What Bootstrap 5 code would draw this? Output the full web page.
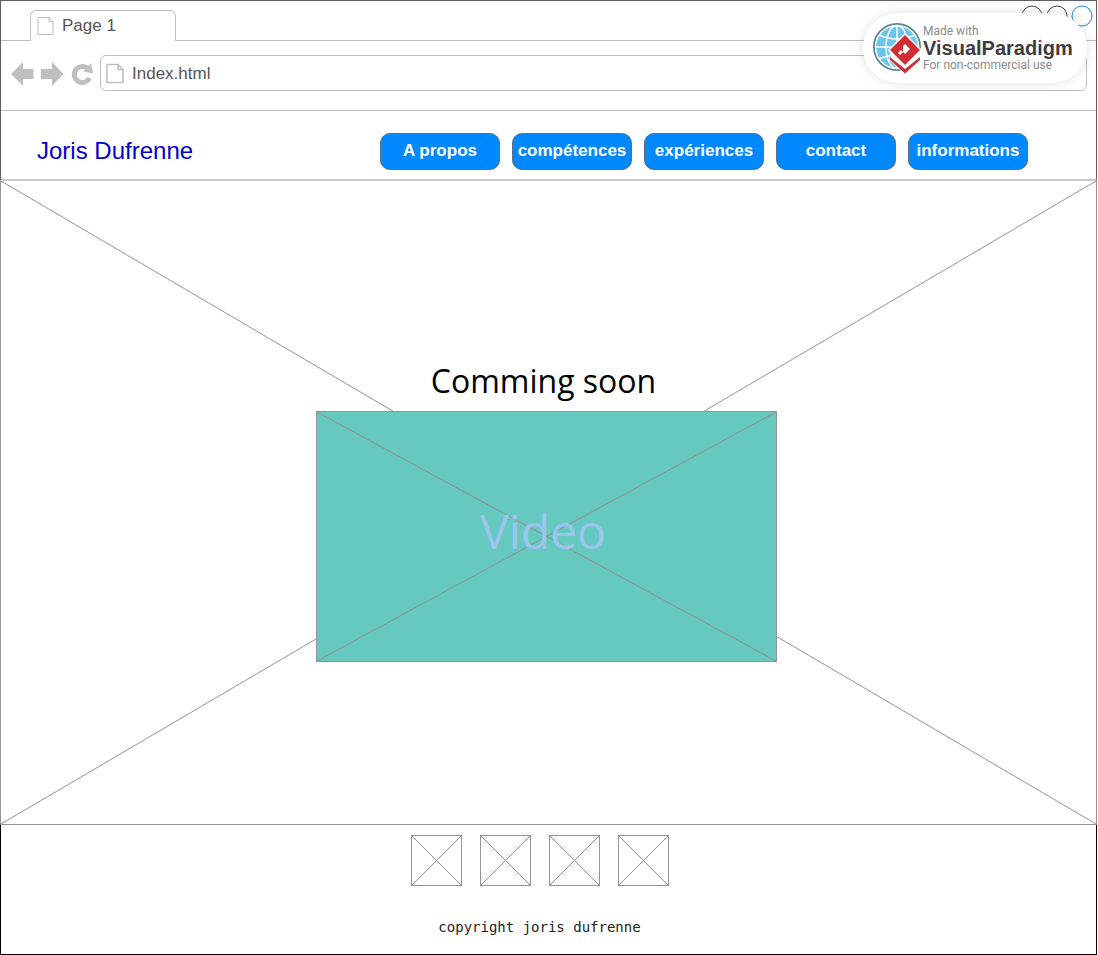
<!DOCTYPE html>
<html lang="fr">
<head>
<meta charset="utf-8">
<meta name="viewport" content="width=device-width, initial-scale=1">
<title>Joris Dufrenne</title>
<link href="https://cdn.jsdelivr.net/npm/bootstrap@5.3.0/dist/css/bootstrap.min.css" rel="stylesheet">
<style>
  body { font-family: "Liberation Sans", Arial, sans-serif; font-size: 17px; line-height: 24px; color: #555; background: #fff; }
  svg { display: block; }
  .browser-frame { margin-right: 1px; }
  .tab-strip { height: 41px; border: 1px solid #5f5f63; border-bottom: 0; padding-left: 29px; box-shadow: inset 0 -1px #bfbfbf; }
  .page-tab { width: 146px; height: 31px; padding: 0 6px; border: 1px solid #bfbfbf; border-bottom: 0; border-radius: 6px 6px 0 0; background: #fff; }
  .window-dots { gap: 3px; padding: 4px 3px 0 0; }
  .address-row { height: 70px; padding: 0 9px 6px 10px; gap: 7px; border: solid #5f5f63; border-width: 0 1px; box-shadow: inset 0 -1px #bfbfbf; }
  .tool-btn { padding: 0; border: 0; background: none; }
  .address-box { height: 36px; border: 1px solid #bfbfbf; border-radius: 6px; padding: 0 5px; background: #fff; }
  .address-box input { font-size: 17px; line-height: 24px; color: #555; border: 0; padding: 2px 0 0; outline: 0; background: none; }
  .site-head { min-height: 70px; padding: 12px 68px 0 36px; border: solid #5f5f63; border-width: 0 1px; border-bottom: 2px solid #c8c8c8; margin-bottom: -1px; }
  .site-name { font-size: 24px; color: #0000cd; text-decoration: none; }
  .site-links { gap: 12px; }
  .site-links .btn { --bs-btn-color: #fff; --bs-btn-bg: #0088ff; --bs-btn-border-color: #59708a; --bs-btn-hover-color: #fff; --bs-btn-hover-bg: #0078e0; --bs-btn-hover-border-color: #59708a; width: 120px; height: 37px; padding: 0; font-size: 17px; font-weight: 700; line-height: 24px; border-radius: 10px; }
  .hero { border: 1px solid #949494; border-top-color: #c8c8c8; padding: 14px 4px 0 0; }
  .cross { position: absolute; inset: 0; width: 100%; height: 100%; stroke: #949494; fill: none; }
  .cross line { vector-effect: non-scaling-stroke; }
  .soon { font-family: "Open Sans", sans-serif; font-size: 32px; line-height: 46px; font-weight: 400; color: #000; padding-right: 6px; margin-bottom: 7px; }
  .video-box { width: 461px; max-width: 100%; aspect-ratio: 461 / 251; background: #65c9bf; border: 1px solid #8f9796; }
  .video-label { font-family: "Open Sans", sans-serif; font-size: 48px; line-height: 64px; color: #9bc5ef; padding: 0 7px 10px 0; }
  .site-foot { border: solid #000; border-width: 0 1px 1px; padding: 10px 18px 17px 0; }
  .social { gap: 18px; }
  .social a { width: 51px; height: 51px; border: 1px solid #949494; position: relative; }
  .copy { font-family: "DejaVu Sans Mono", monospace; font-size: 14px; line-height: 20px; color: #222; margin-top: 31px; }
  .vp-pill { position: absolute; top: 13px; right: 10px; width: 224px; height: 70px; padding-left: 9px; border-radius: 35px; background: #fff; box-shadow: 0 0 12px rgba(0,0,0,.12); text-decoration: none; }
  .vp-small { font-family: Roboto, sans-serif; font-size: 12px; line-height: 14px; color: #8a8a8a; }
  .vp-name { font-family: "Liberation Sans", Arial, sans-serif; font-size: 20px; line-height: 20px; font-weight: 700; color: #3d3d3f; white-space: nowrap; }
  .dot-i { background: linear-gradient(#cf2e34 0 6px, #3d3d3f 6px); -webkit-background-clip: text; background-clip: text; color: transparent; }
</style>
</head>
<body>
<div class="browser-frame d-flex flex-column min-vh-100 position-relative">
  <div class="tab-strip d-flex justify-content-between align-items-end">
    <div class="page-tab d-flex align-items-center gap-2">
      <svg width="17" height="20" viewBox="0 0 17 20" fill="none" stroke="#bfbfbf"><path d="M1 1.5h11l4 4v13H1zM12 1.5v4h4"/></svg>
      <span>Page 1</span>
    </div>
    <div class="window-dots d-flex align-self-start">
      <svg width="22" height="22" viewBox="0 0 22 22" fill="none" stroke="#444"><circle cx="11" cy="11" r="10"/></svg>
      <svg width="22" height="22" viewBox="0 0 22 22" fill="none" stroke="#444"><circle cx="11" cy="11" r="10"/></svg>
      <svg width="22" height="22" viewBox="0 0 22 22" fill="none" stroke="#1e88e5"><circle cx="11" cy="11" r="10"/></svg>
    </div>
  </div>

  <div class="address-row d-flex align-items-center">
    <button class="tool-btn" type="button" aria-label="Back"><svg width="23" height="26" viewBox="0 0 23 26" fill="#bfbfbf"><path d="M0 14 12 2V9H22.500V19H12V26z"/></svg></button>
    <button class="tool-btn" type="button" aria-label="Forward"><svg width="23" height="26" viewBox="0 0 23 26" fill="#bfbfbf"><path d="M22.500 14 11 2V9H0V19H11V26z"/></svg></button>
    <button class="tool-btn" type="button" aria-label="Reload"><svg width="22" height="24" viewBox="0 0 22 24"><path d="M18.500 17A8 8 0 1 1 16 7" fill="none" stroke="#bfbfbf" stroke-width="5"/><path d="M20 2 22 12.500 12.500 10.500z" fill="#bfbfbf"/></svg></button>
    <div class="address-box flex-fill d-flex align-items-center gap-2">
      <svg width="18" height="21" viewBox="0 0 18 21" fill="none" stroke="#bfbfbf" stroke-width="1.500"><path d="M1 1.500h11l5 5v13H1zM12 1.500v5h5"/></svg>
      <input class="flex-fill" type="text" value="Index.html" aria-label="Address">
    </div>
  </div>

  <header class="site-head d-flex flex-wrap align-items-center justify-content-between">
    <a class="site-name" href="#">Joris Dufrenne</a>
    <nav class="site-links d-flex flex-wrap">
      <button class="btn" type="button">A propos</button>
      <button class="btn" type="button">compétences</button>
      <button class="btn" type="button">expériences</button>
      <button class="btn" type="button">contact</button>
      <button class="btn" type="button">informations</button>
    </nav>
  </header>

  <main class="hero position-relative flex-fill d-flex flex-column align-items-center justify-content-center">
    <svg class="cross" viewBox="0 0 100 100" preserveAspectRatio="none"><line x1="0" y1="0" x2="100" y2="100"/><line x1="100" y1="0" x2="0" y2="100"/></svg>
    <h1 class="soon position-relative">Comming soon</h1>
    <div class="video-box position-relative d-flex align-items-center justify-content-center">
      <svg class="cross" viewBox="0 0 100 100" preserveAspectRatio="none"><line x1="0" y1="0" x2="100" y2="100"/><line x1="100" y1="0" x2="0" y2="100"/></svg>
      <span class="video-label position-relative">Video</span>
    </div>
  </main>

  <footer class="site-foot d-flex flex-column align-items-center">
    <div class="social d-flex">
      <a href="#" aria-label="Link 1"><svg class="cross" viewBox="0 0 49 49"><path d="M0 0 49 49M49 0 0 49"/></svg></a>
      <a href="#" aria-label="Link 2"><svg class="cross" viewBox="0 0 49 49"><path d="M0 0 49 49M49 0 0 49"/></svg></a>
      <a href="#" aria-label="Link 3"><svg class="cross" viewBox="0 0 49 49"><path d="M0 0 49 49M49 0 0 49"/></svg></a>
      <a href="#" aria-label="Link 4"><svg class="cross" viewBox="0 0 49 49"><path d="M0 0 49 49M49 0 0 49"/></svg></a>
    </div>
    <p class="copy mb-0">copyright joris dufrenne</p>
  </footer>

  <a class="vp-pill d-flex align-items-center" href="#">
    <svg width="51" height="52" viewBox="0 0 51 52" overflow="visible">
      <circle cx="25" cy="25" r="23" fill="#6cc5f0" stroke="#56868f" stroke-width="2"/>
      <g fill="none" stroke="#fff" stroke-width="1.500"><circle cx="25" cy="25" r="21.500"/><ellipse cx="25" cy="25" rx="11" ry="21.500"/><path d="M25 3v44M3 25h44M7 13q18 8 36 0M7 37q18-8 36 0"/></g>
      <path d="M33 11 50 28 48 38 33 52 17 38 19 33 16 28z" fill="#fff"/>
      <path d="M33 13 48 28 33 43 18 28z" fill="#cf2e34"/>
      <path d="M33 22 38 27 33 32 31 30 28 33 26 31 29 28 31 30V24z" fill="#fff"/>
      <path d="M18 35 33 47 48 35V38L33 51.500 18 38z" fill="#cf2e34"/>
    </svg>
    <span class="d-flex flex-column">
      <span class="vp-small">Made with</span>
      <span class="vp-name">V<span class="dot-i">i</span>sualParad<span class="dot-i">i</span>gm</span>
      <span class="vp-small">For non-commercial use</span>
    </span>
  </a>
</div>
<script src="https://cdn.jsdelivr.net/npm/bootstrap@5.3.0/dist/js/bootstrap.bundle.min.js"></script>
</body>
</html>
